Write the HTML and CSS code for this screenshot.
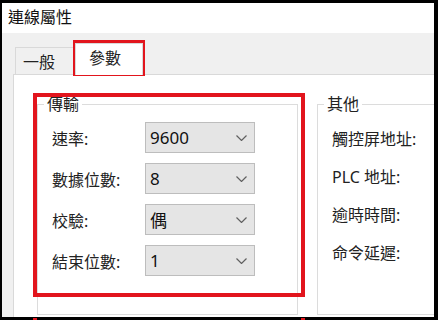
FILE: index.html
```html
<!DOCTYPE html>
<html lang="zh-Hant">
<head>
    <meta charset="UTF-8">
    <meta name="viewport" content="width=device-width, initial-scale=1.0">
    <title>連線屬性</title>
    <link rel="stylesheet" href="styles.css">
</head>
<body>
    <div class="screen">
        <div class="window">
            <div class="titlebar">連線屬性</div>
            <div class="dialog">
                <div class="tabs">
                    <div class="tab">一般</div>
                    <div class="tab active">參數</div>
                </div>
                <div class="panel">
                    <fieldset class="group group-comm">
                        <legend>傳輸</legend>
                        <div class="form">
                            <label>速率:</label>
                            <div class="combo"><span>9600</span><svg width="11" height="6" viewBox="0 0 11 6"><polyline points="0.5,0.5 5.5,5.5 10.5,0.5" /></svg></div>
                            <label>數據位數:</label>
                            <div class="combo"><span>8</span><svg width="11" height="6" viewBox="0 0 11 6"><polyline points="0.5,0.5 5.5,5.5 10.5,0.5" /></svg></div>
                            <label>校驗:</label>
                            <div class="combo"><span>偶</span><svg width="11" height="6" viewBox="0 0 11 6"><polyline points="0.5,0.5 5.5,5.5 10.5,0.5" /></svg></div>
                            <label>結束位數:</label>
                            <div class="combo"><span>1</span><svg width="11" height="6" viewBox="0 0 11 6"><polyline points="0.5,0.5 5.5,5.5 10.5,0.5" /></svg></div>
                        </div>
                    </fieldset>
                    <fieldset class="group group-other">
                        <legend>其他</legend>
                        <div class="list">
                            <div>觸控屏地址:</div>
                            <div>PLC 地址:</div>
                            <div>逾時時間:</div>
                            <div>命令延遲:</div>
                        </div>
                    </fieldset>
                </div>
            </div>
            <!-- red annotation boxes -->
            <div class="mark mark-tab"></div>
            <div class="mark mark-group"></div>
        </div>
        <div class="mark mark-below"></div>
    </div>
</body>
</html>
```

FILE: styles.css
```css
body {
    margin: 0;
    background: #000;
    font-family: "Noto Sans", "Noto Sans CJK TC", sans-serif;
    color: #222;
}
.screen {
    position: relative;
    width: 438px;
    height: 320px;
    box-sizing: border-box;
    padding: 3px 4px 3px 2px;
}
.window {
    position: relative;
    height: 314px;
    background: #fff;
    overflow: hidden;
    display: flex;
    flex-direction: column;
}
.titlebar {
    height: 30px;
    line-height: 28px;
    padding-left: 6px;
    font-size: 16px;
    color: #111;
}
.dialog {
    flex: 1;
    display: flex;
    flex-direction: column;
    background: #f0f0f0;
}
.tabs {
    height: 41px;
    display: flex;
    align-items: flex-end;
    padding-left: 13px;
}
.tab {
    box-sizing: border-box;
    width: 60px;
    height: 27px;
    padding: 4px 0 0 7px;
    line-height: 20px;
    font-size: 16px;
    border: 1px solid #d9d9d9;
    border-bottom: none;
    background: #f0f0f0;
}
.tab.active {
    position: relative;
    z-index: 1;
    width: 68px;
    height: 32px;
    margin-bottom: -1px;
    padding-left: 13px;
    background: #fff;
}
.panel {
    flex: 1;
    display: flex;
    gap: 19px;
    margin-left: 11px;
    padding: 20px 0 0 23px;
    background: #fff;
    border-top: 1px solid #d9d9d9;
    border-left: 1px solid #d9d9d9;
}
.group {
    margin: 0;
    padding: 0;
    min-width: 0;
    height: 220px;
    box-sizing: border-box;
    border: 1px solid #dcdcdc;
    flex-shrink: 0;
}
.group legend {
    margin-left: 6px;
    padding: 0 3px;
    font-size: 16px;
    line-height: 18px;
}
.group-comm {
    width: 261px;
}
.group-other {
    width: 140px;
}
.form {
    display: grid;
    grid-template-columns: 93px 110px;
    grid-auto-rows: 31px;
    row-gap: 10px;
    padding: 9px 0 0 14px;
    align-items: center;
}
.form label {
    font-size: 16px;
}
.combo {
    box-sizing: border-box;
    height: 31px;
    display: flex;
    align-items: center;
    justify-content: space-between;
    padding: 0 7px 0 4px;
    background: #e5e5e5;
    border: 1px solid #bdbdbd;
    font-size: 17px;
    color: #111;
}
.combo svg polyline {
    fill: none;
    stroke: #606060;
    stroke-width: 1.2;
}
.list {
    padding: 7px 0 0 14px;
    font-size: 16px;
}
.list div {
    height: 38px;
    line-height: 38px;
    white-space: nowrap;
}
.mark {
    position: absolute;
    box-sizing: border-box;
    border: 4px solid #e2151d;
}
.mark-tab {
    left: 71px;
    top: 37px;
    width: 72px;
    height: 36px;
}
.mark-group {
    left: 31px;
    top: 90px;
    width: 272px;
    height: 204px;
}
.mark-below {
    left: 33px;
    top: 318px;
    width: 272px;
    height: 6px;
    border-top: none;
    border-bottom: none;
}
```
